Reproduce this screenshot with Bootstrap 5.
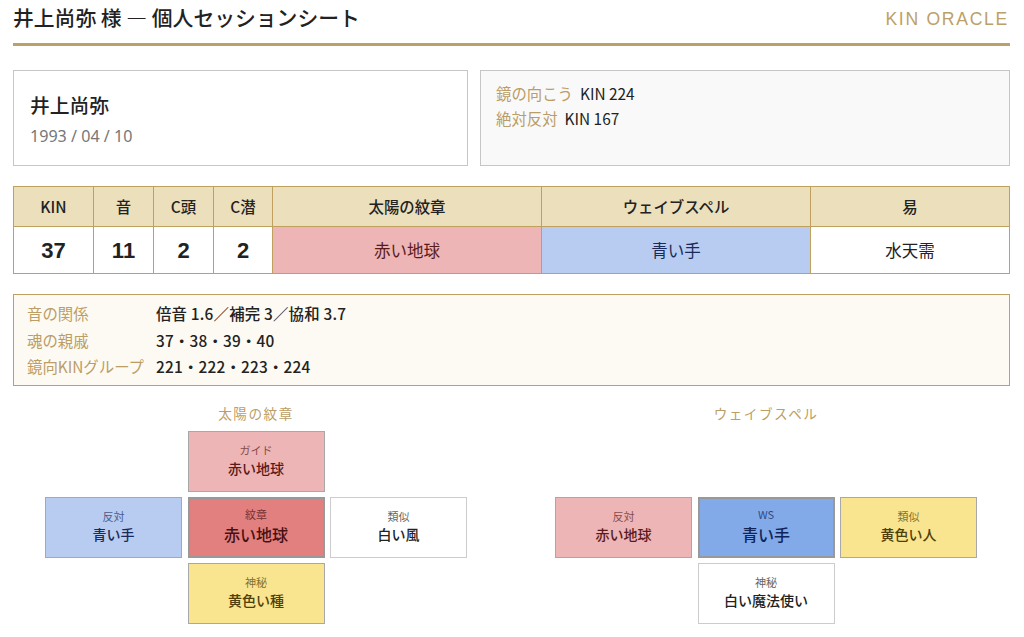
<!DOCTYPE html>
<html lang="ja">
<head>
    <meta charset="UTF-8">
    <meta name="viewport" content="width=device-width, initial-scale=1.0">
    <link href="https://cdn.jsdelivr.net/npm/bootstrap@5.3.3/dist/css/bootstrap.min.css" rel="stylesheet">
    <style>
        body { font-family: "Noto Sans CJK JP", "Noto Sans", sans-serif; color: #222; background: #fff; }
        .sheet { padding: 0 14px 0 13px; width: 1024px; }
        .sheet-head { height: 46px; border-bottom: 3px solid #bda068; padding-bottom: 8px; }
        .sheet-title { font-size: 20.8px; font-weight: 500; line-height: 34px; margin: 0; }
        .brand { font-family: "Liberation Sans", sans-serif; font-size: 17.6px; letter-spacing: 1.7px; color: #bda068; line-height: 38px; margin-right: 1px; }
        .top-row { margin-top: 24px; gap: 12px; height: 96px; }
        .profile { width: 455px; border: 1px solid #c6c6c6; padding: 16px 16px; }
        .profile-name { font-size: 19.8px; font-weight: 500; line-height: 36px; }
        .profile-date { font-family: "Noto Sans", sans-serif; font-size: 16.1px; color: #777; line-height: 26px; }
        .mirror { flex: 1; border: 1px solid #c6c6c6; background: #f9f9f9; padding: 10px 15px; font-size: 15.4px; line-height: 25px; }
        .gold { color: #bb9d66; }
        .mirror .gold { margin-right: 7px; }
        .kin-table { margin-top: 20px; table-layout: fixed; width: 996px; border-collapse: collapse; text-align: center; }
        .kin-table col:nth-child(1) { width: 80px; }
        .kin-table col:nth-child(2), .kin-table col:nth-child(3) { width: 60px; }
        .kin-table col:nth-child(4) { width: 59px; }
        .kin-table col:nth-child(5), .kin-table col:nth-child(6) { width: 269px; }
        .kin-table col:nth-child(7) { width: 199px; }
        .kin-table th, .kin-table td { border: 1px solid #bfa05f; padding: 0; text-align: center; vertical-align: middle; }
        .kin-table th { background: #ecdfbb; height: 40px; font-size: 15.4px; font-weight: 500; }
        .kin-table td { height: 47px; font-size: 16.5px; }
        .kin-table td.num { font-family: "Liberation Sans", sans-serif; font-size: 22px; font-weight: 700; }
        .bg-red { background: #edb5b5; color: #5a1a1a; }
        .bg-blue { background: #b8ccf2; color: #1a2a5a; }
        .bg-yellow { background: #f9e58f; color: #4f3f0a; }
        .bg-white-seal { background: #fff; color: #222; }
        .relation { margin-top: 20px; height: 92px; border: 1px solid #bfa05f; background: #fdfaf3; padding: 5px 13px; font-size: 15.4px; line-height: 26.5px; }
        .relation dt { width: 129px; font-weight: 400; color: #bb9d66; white-space: nowrap; }
        .relation dd { margin: 0; font-weight: 500; letter-spacing: .2px; }
        .charts { margin-top: 17px; gap: 24px; }
        .chart { width: 486px; }
        .chart-title { font-size: 13.6px; letter-spacing: 1.5px; color: #bb9d66; text-align: center; line-height: 20px; margin-bottom: 8px; }
        .seal-grid { display: grid; grid-template-columns: repeat(3, 137px); grid-auto-rows: 61px; gap: 5px 5.5px; justify-content: center; }
        .seal { border: 1px solid #a8a8a8; text-align: center; display: flex; flex-direction: column; justify-content: center; padding-bottom: 3px; }
        .seal small { display: block; font-size: 11px; line-height: 17px; opacity: .7; }
        .seal strong { display: block; font-size: 14px; font-weight: 500; line-height: 21px; margin-top: -1px; }
        .seal.plain { border-color: #ccc; }
        .seal.main { border: 2px solid #999; }
        .seal.main strong { font-size: 16px; line-height: 24px; }
        .seal-red-main { background: #e28080; color: #4a1010; }
        .seal-blue-main { background: #82aae8; color: #10245a; }
        .slot-top { grid-column: 2; grid-row: 1; }
        .slot-left { grid-column: 1; grid-row: 2; }
        .slot-center { grid-column: 2; grid-row: 2; }
        .slot-right { grid-column: 3; grid-row: 2; }
        .slot-bottom { grid-column: 2; grid-row: 3; }
    </style>
    <script src="https://cdn.jsdelivr.net/npm/bootstrap@5.3.3/dist/js/bootstrap.bundle.min.js"></script>
    <title>個人セッションシート</title>
</head>
<body>
<div class="sheet">
    <header class="sheet-head d-flex justify-content-between">
        <h1 class="sheet-title">井上尚弥 様 — 個人セッションシート</h1>
        <span class="brand">KIN ORACLE</span>
    </header>

    <div class="top-row d-flex">
        <div class="profile">
            <div class="profile-name">井上尚弥</div>
            <div class="profile-date">1993 / 04 / 10</div>
        </div>
        <div class="mirror">
            <div><span class="gold">鏡の向こう</span>KIN 224</div>
            <div><span class="gold">絶対反対</span>KIN 167</div>
        </div>
    </div>

    <table class="kin-table">
        <colgroup>
            <col><col><col><col><col><col><col>
        </colgroup>
        <thead>
        <tr><th>KIN</th><th>音</th><th>C頭</th><th>C潜</th><th>太陽の紋章</th><th>ウェイブスペル</th><th>易</th></tr>
        </thead>
        <tbody>
        <tr>
            <td class="num">37</td><td class="num">11</td><td class="num">2</td><td class="num">2</td>
            <td class="bg-red">赤い地球</td><td class="bg-blue">青い手</td><td>水天需</td>
        </tr>
        </tbody>
    </table>

    <dl class="relation mb-0">
        <div class="d-flex"><dt>音の関係</dt><dd>倍音 1.6／補完 3／協和 3.7</dd></div>
        <div class="d-flex"><dt>魂の親戚</dt><dd>37・38・39・40</dd></div>
        <div class="d-flex"><dt>鏡向KINグループ</dt><dd>221・222・223・224</dd></div>
    </dl>

    <div class="charts d-flex">
        <section class="chart">
            <div class="chart-title">太陽の紋章</div>
            <div class="seal-grid">
                <div class="seal slot-top bg-red"><small>ガイド</small><strong>赤い地球</strong></div>
                <div class="seal slot-left bg-blue"><small>反対</small><strong>青い手</strong></div>
                <div class="seal main slot-center seal-red-main"><small>紋章</small><strong>赤い地球</strong></div>
                <div class="seal plain slot-right bg-white-seal"><small>類似</small><strong>白い風</strong></div>
                <div class="seal slot-bottom bg-yellow"><small>神秘</small><strong>黄色い種</strong></div>
            </div>
        </section>
        <section class="chart">
            <div class="chart-title">ウェイブスペル</div>
            <div class="seal-grid">
                <div class="seal slot-left bg-red"><small>反対</small><strong>赤い地球</strong></div>
                <div class="seal main slot-center seal-blue-main"><small>WS</small><strong>青い手</strong></div>
                <div class="seal slot-right bg-yellow"><small>類似</small><strong>黄色い人</strong></div>
                <div class="seal plain slot-bottom bg-white-seal"><small>神秘</small><strong>白い魔法使い</strong></div>
            </div>
        </section>
    </div>
</div>
</body>
</html>
